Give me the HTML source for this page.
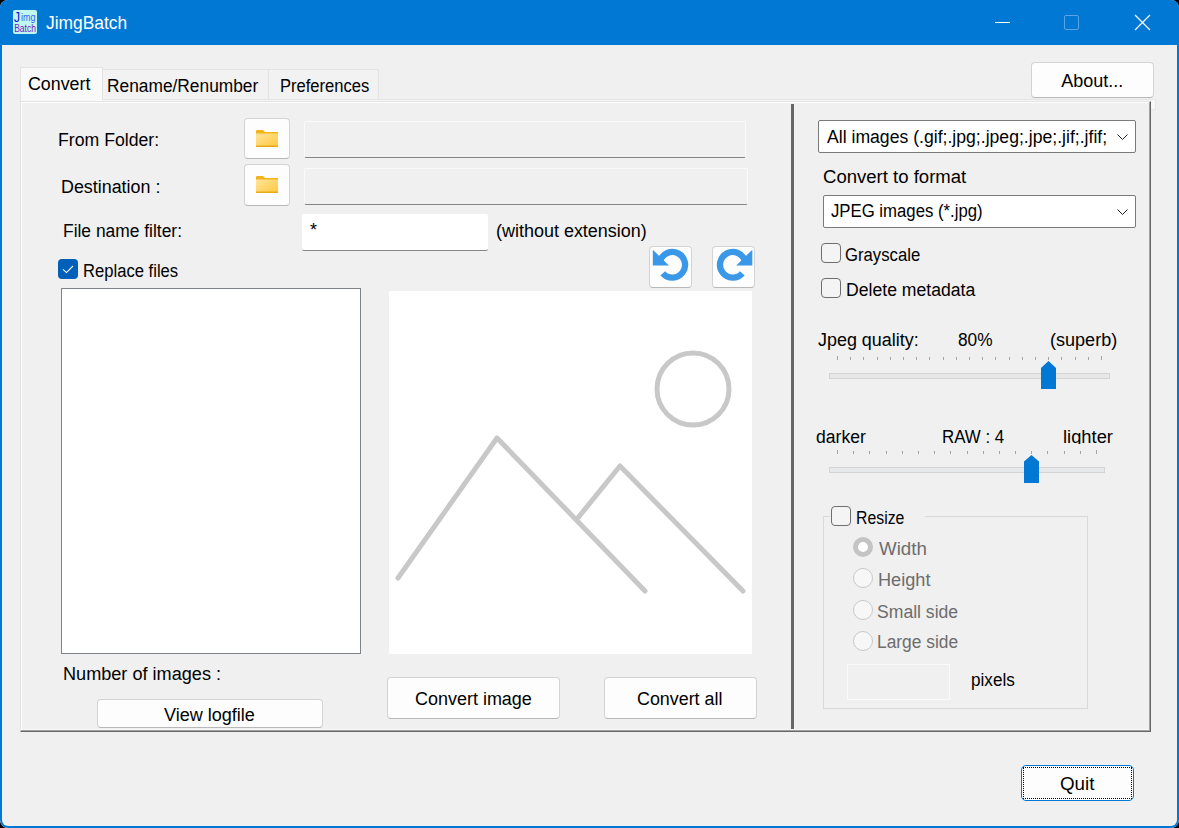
<!DOCTYPE html>
<html><head><meta charset="utf-8">
<style>
*{box-sizing:border-box;margin:0;padding:0}
html,body{width:1179px;height:828px;overflow:hidden;background:#000}
body{font-family:"Liberation Sans",sans-serif;font-size:18px;color:#000;position:relative}
.a{position:absolute}
svg{position:absolute;overflow:visible}
.win{position:absolute;left:0;top:0;width:1179px;height:828px;background:#f0f0f0;border-radius:8px;overflow:hidden}
.wborder{position:absolute;left:0;top:0;width:1179px;height:828px;border:2px solid #0078d4;border-top:0;border-radius:8px}
.title{position:absolute;left:0;top:0;width:1179px;height:45px;background:#0078d4}
.t{position:absolute;white-space:nowrap;line-height:20px;transform-origin:0 0;color:#000}
.btn{position:absolute;background:#fdfdfd;border:1px solid #d3d3d3;border-bottom-color:#b8b8b8;border-radius:4px}
.edit{position:absolute;background:#f0f0f0;border:1px solid #fafafa;border-bottom:1px solid #868686;border-radius:2px}
.cb{position:absolute;width:20px;height:20px;border:1px solid #6e6e6e;border-radius:4px;background:#f4f4f4}
.radio{position:absolute;width:20px;height:20px;border:1px solid #c9c9c9;border-radius:50%;background:#f7f7f7}
.combo{position:absolute;background:#fff;border:1px solid #7a7a7a;border-radius:2px}
.tick{position:absolute;width:1px;height:4px;background:#a4a4a4}
</style></head><body>
<div class="win">
  <div class="title">
    <div class="a" style="left:13px;top:10px;width:24px;height:24px;background:#c2f7ef;border-radius:2px"></div>
    <svg style="left:0;top:0" width="1" height="1"><g font-family="Liberation Sans">
      <text x="14" y="22" font-size="14.5" fill="#1010e8" textLength="6" lengthAdjust="spacingAndGlyphs">J</text>
      <text x="21" y="21" font-size="10" fill="#3a60f0" textLength="14.5" lengthAdjust="spacingAndGlyphs">img</text>
      <text x="14.2" y="32" font-size="11.5" fill="#7322c4" textLength="21.8" lengthAdjust="spacingAndGlyphs">Batch</text>
    </g></svg>
    <div class="t" style="left:45.9px;top:12.7px;transform:scaleX(0.966);color:#ffffff;">JimgBatch</div>
    <div class="a" style="left:995px;top:22px;width:15px;height:1px;background:#fff"></div>
    <div class="a" style="left:1064px;top:15px;width:15px;height:15px;border:1px solid #5aa5e6;border-radius:2px"></div>
    <svg style="left:1133px;top:13px" width="20" height="20" viewBox="0 0 20 20"><path d="M2 2L17 17M17 2L2 17" stroke="#fff" stroke-width="1.2"/></svg>
  </div>

  <!-- tabs -->
  <div class="a" style="left:102px;top:69px;width:167px;height:31px;background:#f2f2f2;border:1px solid #e3e3e3"></div>
  <div class="a" style="left:268px;top:69px;width:111px;height:31px;background:#f2f2f2;border:1px solid #e3e3e3"></div>
  <div class="a" style="left:20px;top:67px;width:83px;height:35px;background:#f9f9f9;border:1px solid #e3e3e3;border-bottom:0"></div>
  <div class="t" style="left:27.6px;top:74.0px;transform:scaleX(0.990);">Convert</div>
  <div class="t" style="left:106.6px;top:76.0px;transform:scaleX(0.963);">Rename/Renumber</div>
  <div class="t" style="left:279.8px;top:76.0px;transform:scaleX(0.920);">Preferences</div>

  <!-- tab panel -->
  <div class="a" style="left:102px;top:99px;width:1049px;height:1px;background:#e4e4e4"></div>
  <div class="a" style="left:102px;top:100px;width:1049px;height:1px;background:#f6f6f6"></div>
  <div class="a" style="left:20px;top:101px;width:1131px;height:631px;border-top:1px solid #e3e3e3;border-left:1px solid #e3e3e3;border-right:1px solid #666;border-bottom:1px solid #666"></div>
  <div class="a" style="left:1149px;top:102px;width:1px;height:629px;background:#a4a4a4"></div>
  <div class="a" style="left:21px;top:730px;width:1129px;height:1px;background:#a4a4a4"></div>
  <div class="a" style="left:21px;top:102px;width:1128px;height:1px;background:#fff"></div>
  <div class="a" style="left:21px;top:102px;width:1px;height:628px;background:#fff"></div>
  <div class="a" style="left:22px;top:729px;width:1127px;height:1px;background:#f6f6f6"></div>
  <div class="a" style="left:1151px;top:99px;width:5px;height:11px;background:#f8f8f8;border:1px solid #e8e8e8;border-left:0"></div>
  <div class="a" style="left:791px;top:104px;width:3px;height:625px;background:#666"></div>

  <!-- about -->
  <div class="btn" style="left:1031px;top:62px;width:123px;height:36px"></div>
  <div class="t" style="left:1061.3px;top:70.9px;transform:scaleX(1.000);">About...</div>

  <!-- left: folders -->
  <div class="t" style="left:58.2px;top:130.0px;transform:scaleX(0.982);">From Folder:</div>
  <div class="btn" style="left:244px;top:118px;width:46px;height:41px"></div>
  <svg style="left:256px;top:130px" width="22" height="17" viewBox="0 0 22 17">
<defs><linearGradient id="fg130" x1="0" y1="0" x2="1" y2="1"><stop offset="0" stop-color="#ffe49a"/><stop offset="1" stop-color="#ffc83d"/></linearGradient></defs>
<path d="M0 1Q0 0 1 0H7L9 2H22V4H0Z" fill="#f3b41b"/>
<rect x="0" y="3.5" width="22" height="13.5" rx="0.5" fill="url(#fg130)"/>
<rect x="0" y="15.5" width="22" height="1.5" fill="#eaa918"/>
</svg>
  <div class="edit" style="left:304px;top:121px;width:442px;height:37px"></div>
  <div class="t" style="left:61.1px;top:177.2px;transform:scaleX(0.993);">Destination :</div>
  <div class="btn" style="left:244px;top:164px;width:46px;height:42px"></div>
  <svg style="left:256px;top:176px" width="22" height="17" viewBox="0 0 22 17">
<defs><linearGradient id="fg176" x1="0" y1="0" x2="1" y2="1"><stop offset="0" stop-color="#ffe49a"/><stop offset="1" stop-color="#ffc83d"/></linearGradient></defs>
<path d="M0 1Q0 0 1 0H7L9 2H22V4H0Z" fill="#f3b41b"/>
<rect x="0" y="3.5" width="22" height="13.5" rx="0.5" fill="url(#fg176)"/>
<rect x="0" y="15.5" width="22" height="1.5" fill="#eaa918"/>
</svg>
  <div class="edit" style="left:304px;top:168px;width:444px;height:37px"></div>
  <div class="t" style="left:63.0px;top:220.8px;transform:scaleX(0.967);">File name filter:</div>
  <div class="a" style="left:302px;top:214px;width:186px;height:37px;background:#fff;border-bottom:1px solid #868686;border-radius:2px"></div>
  <div class="t" style="left:310px;top:220px">*</div>
  <div class="t" style="left:495.5px;top:220.7px;transform:scaleX(0.998);">(without extension)</div>
  <div class="btn" style="left:649px;top:246px;width:43px;height:42px"></div>
  <div class="btn" style="left:712px;top:246px;width:43px;height:42px"></div>
  <svg style="left:0;top:0" width="1" height="1">
<path d="M662.79 273.36A12.8 12.8 0 1 0 660.06 261.06" fill="none" stroke="#3a98e8" stroke-width="6.3"/>
<path d="M652.8 249.8L652.8 265.4L668.9 265.4Z" fill="#3a98e8"/>
<path d="M742.31 273.36A12.8 12.8 0 1 1 745.04 261.06" fill="none" stroke="#3a98e8" stroke-width="6.3"/>
<path d="M752.3 249.8L752.3 265.4L736.2 265.4Z" fill="#3a98e8"/>
</svg>

  <!-- replace files -->
  <div class="a" style="left:58px;top:259px;width:20px;height:20px;background:#005fb8;border-radius:4px"></div>
  <svg style="left:58px;top:259px" width="20" height="20"><path d="M5 10.3L8.5 13.6L15 7" fill="none" stroke="#fff" stroke-width="1.1"/></svg>
  <div class="t" style="left:83.2px;top:260.9px;transform:scaleX(0.923);">Replace files</div>

  <!-- list -->
  <div class="a" style="left:61px;top:288px;width:300px;height:366px;background:#fff;border:1px solid #7f838a"></div>
  <div class="t" style="left:63.0px;top:663.9px;transform:scaleX(1.006);">Number of images :</div>
  <div class="btn" style="left:97px;top:699px;width:226px;height:29px"></div>
  <div class="t" style="left:164.3px;top:705.0px;transform:scaleX(1.002);">View logfile</div>

  <!-- preview -->
  <div class="a" style="left:389px;top:291px;width:363px;height:363px;background:#fff"></div>
  <svg style="left:0;top:0" width="1" height="1">
<g fill="none" stroke="#c8c8c8" stroke-width="5" stroke-linecap="round" stroke-linejoin="round">
<circle cx="693" cy="389" r="36"/>
<path d="M398 578L497 438L645 591"/>
<path d="M577 519L620 466L743 591"/>
</g></svg>
  <div class="btn" style="left:387px;top:677px;width:173px;height:42px"></div>
  <div class="t" style="left:414.7px;top:689.4px;transform:scaleX(0.998);">Convert image</div>
  <div class="btn" style="left:604px;top:677px;width:153px;height:42px"></div>
  <div class="t" style="left:637.0px;top:689.4px;transform:scaleX(0.993);">Convert all</div>

  <!-- right -->
  <div class="combo" style="left:818px;top:120px;width:318px;height:33px"></div>
  <div class="t" style="left:826.5px;top:126.8px;transform:scaleX(0.979);">All images (.gif;.jpg;.jpeg;.jpe;.jif;.jfif;</div>
  <svg style="left:1116px;top:133px" width="12" height="8"><path d="M1.5 1.5L6.5 6.5L11.5 1.5" fill="none" stroke="#222" stroke-width="1"/></svg>
  <div class="t" style="left:822.6px;top:166.6px;transform:scaleX(1.030);">Convert to format</div>
  <div class="combo" style="left:823px;top:195px;width:313px;height:33px"></div>
  <div class="t" style="left:831.3px;top:201.3px;transform:scaleX(0.930);">JPEG images (*.jpg)</div>
  <svg style="left:1116px;top:208px" width="12" height="8"><path d="M1.5 1.5L6.5 6.5L11.5 1.5" fill="none" stroke="#222" stroke-width="1"/></svg>
  <div class="cb" style="left:821px;top:243px"></div>
  <div class="t" style="left:845.4px;top:244.6px;transform:scaleX(0.928);">Grayscale</div>
  <div class="cb" style="left:821px;top:278px"></div>
  <div class="t" style="left:846.0px;top:279.8px;transform:scaleX(0.979);">Delete metadata</div>

  <div class="t" style="left:817.6px;top:330.2px;transform:scaleX(0.996);">Jpeg quality:</div>
  <div class="t" style="left:957.8px;top:330.2px;transform:scaleX(0.960);">80%</div>
  <div class="t" style="left:1050.0px;top:330.2px;transform:scaleX(1.003);">(superb)</div>
  <div class="tick" style="left:837px;top:356px;height:4px"></div><div class="tick" style="left:850px;top:357px;height:3px"></div><div class="tick" style="left:863px;top:357px;height:3px"></div><div class="tick" style="left:877px;top:357px;height:3px"></div><div class="tick" style="left:890px;top:357px;height:3px"></div><div class="tick" style="left:903px;top:357px;height:3px"></div><div class="tick" style="left:916px;top:357px;height:3px"></div><div class="tick" style="left:929px;top:357px;height:3px"></div><div class="tick" style="left:943px;top:357px;height:3px"></div><div class="tick" style="left:956px;top:357px;height:3px"></div><div class="tick" style="left:969px;top:357px;height:3px"></div><div class="tick" style="left:982px;top:357px;height:3px"></div><div class="tick" style="left:995px;top:357px;height:3px"></div><div class="tick" style="left:1009px;top:357px;height:3px"></div><div class="tick" style="left:1022px;top:357px;height:3px"></div><div class="tick" style="left:1035px;top:357px;height:3px"></div><div class="tick" style="left:1048px;top:357px;height:3px"></div><div class="tick" style="left:1061px;top:357px;height:3px"></div><div class="tick" style="left:1075px;top:357px;height:3px"></div><div class="tick" style="left:1088px;top:357px;height:3px"></div><div class="tick" style="left:1101px;top:356px;height:4px"></div>
  <div class="a" style="left:829px;top:373px;width:281px;height:6px;background:#e6e8e9;border:1px solid #d3d3d3"></div>
  <svg style="left:0;top:0" width="1" height="1"><path d="M1041 368L1048.5 361L1056 368L1056 389L1041 389Z" fill="#0078d4"/></svg>

  <div class="t" style="left:815.8px;top:426.5px;transform:scaleX(0.976);">darker</div>
  <div class="t" style="left:942.1px;top:426.5px;transform:scaleX(0.938);">RAW : 4</div>
  <div class="a" style="left:1060px;top:420px;width:70px;height:24px;overflow:hidden"><div class="a" style="left:-1060px;top:-420px"><div class="t" style="left:1062.8px;top:426.5px;transform:scaleX(1.019);">lighter</div></div></div>
  <div class="tick" style="left:837px;top:450px;height:4px"></div><div class="tick" style="left:853px;top:451px;height:3px"></div><div class="tick" style="left:869px;top:451px;height:3px"></div><div class="tick" style="left:886px;top:451px;height:3px"></div><div class="tick" style="left:902px;top:451px;height:3px"></div><div class="tick" style="left:918px;top:451px;height:3px"></div><div class="tick" style="left:934px;top:451px;height:3px"></div><div class="tick" style="left:950px;top:451px;height:3px"></div><div class="tick" style="left:967px;top:451px;height:3px"></div><div class="tick" style="left:983px;top:451px;height:3px"></div><div class="tick" style="left:999px;top:451px;height:3px"></div><div class="tick" style="left:1015px;top:451px;height:3px"></div><div class="tick" style="left:1031px;top:451px;height:3px"></div><div class="tick" style="left:1047px;top:451px;height:3px"></div><div class="tick" style="left:1064px;top:451px;height:3px"></div><div class="tick" style="left:1080px;top:451px;height:3px"></div><div class="tick" style="left:1096px;top:450px;height:4px"></div>
  <div class="a" style="left:829px;top:467px;width:276px;height:6px;background:#e6e8e9;border:1px solid #d3d3d3"></div>
  <svg style="left:0;top:0" width="1" height="1"><path d="M1024 461.5L1031.5 455L1039 461.5L1039 483L1024 483Z" fill="#0078d4"/></svg>

  <!-- resize group -->
  <div class="a" style="left:823px;top:516px;width:265px;height:193px;border:1px solid #d9d9d9"></div>
  <div class="a" style="left:830px;top:505px;width:95px;height:24px;background:#f0f0f0"></div>
  <div class="cb" style="left:831px;top:506px"></div>
  <div class="t" style="left:856.2px;top:507.7px;transform:scaleX(0.879);">Resize</div>
  <div class="radio" style="left:853px;top:537px;border:5.5px solid #c4c4c4;background:#fff"></div>
  <div class="t" style="left:878.5px;top:538.5px;transform:scaleX(1.040);color:#6d6d6d;">Width</div>
  <div class="radio" style="left:853px;top:568px"></div>
  <div class="t" style="left:877.8px;top:569.5px;transform:scaleX(1.008);color:#6d6d6d;">Height</div>
  <div class="radio" style="left:853px;top:600px"></div>
  <div class="t" style="left:877.2px;top:602.0px;transform:scaleX(0.977);color:#6d6d6d;">Small side</div>
  <div class="radio" style="left:853px;top:631px"></div>
  <div class="t" style="left:877.2px;top:632.2px;transform:scaleX(0.965);color:#6d6d6d;">Large side</div>
  <div class="a" style="left:847px;top:664px;width:103px;height:36px;border:1px solid #fafafa"></div>
  <div class="t" style="left:970.5px;top:670.2px;transform:scaleX(0.951);">pixels</div>

  <!-- quit -->
  <div class="a" style="left:1021px;top:765px;width:113px;height:36px;background:#fdfdfd;border:1px solid #0078d4;border-radius:5px"></div>
  <div class="a" style="left:1023px;top:767px;width:109px;height:32px;border:1px dotted #000"></div>
  <div class="t" style="left:1059.6px;top:773.7px;transform:scaleX(1.044);">Quit</div>

  <div class="wborder"></div>
</div>
</body></html>
